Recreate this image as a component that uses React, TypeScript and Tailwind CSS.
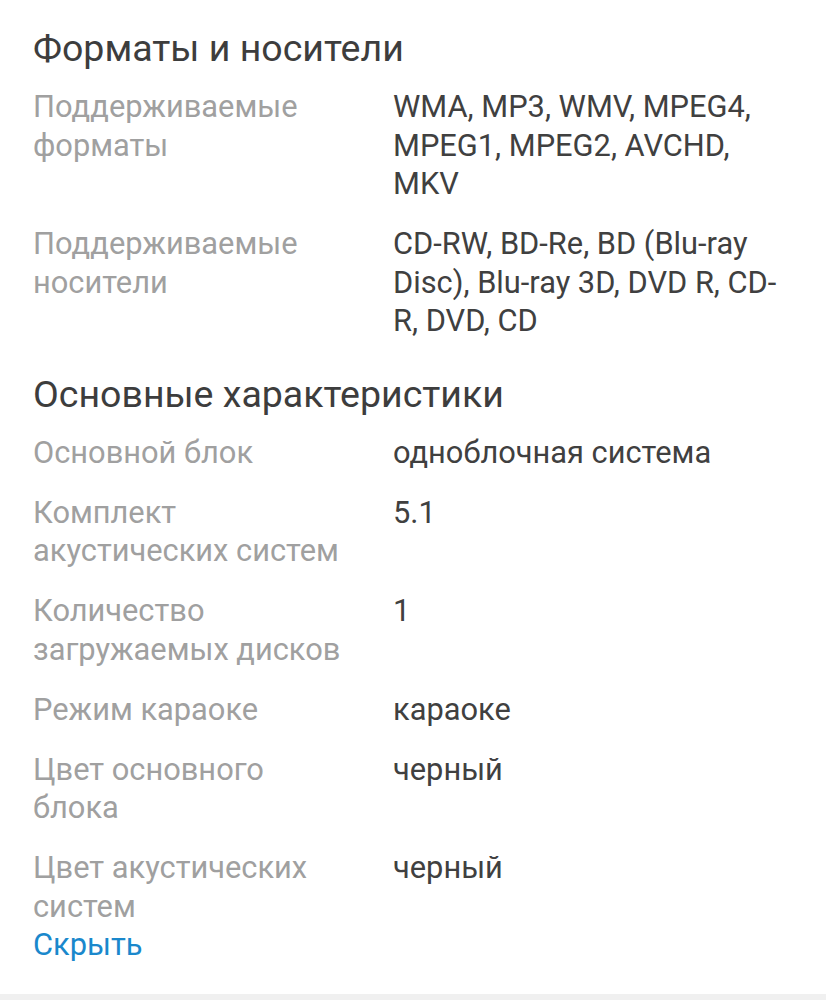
const formats = [
  { label: "Поддерживаемые форматы", value: "WMA, MP3, WMV, MPEG4, MPEG1, MPEG2, AVCHD, MKV" },
  { label: "Поддерживаемые носители", value: "CD-RW, BD-Re, BD (Blu-ray Disc), Blu-ray 3D, DVD R, CD-R, DVD, CD" },
];

const basics = [
  { label: "Основной блок", value: "одноблочная система" },
  { label: "Комплект акустических систем", value: "5.1" },
  { label: "Количество загружаемых дисков", value: "1" },
  { label: "Режим караоке", value: "караоке" },
  { label: "Цвет основного блока", value: "черный" },
  { label: "Цвет акустических систем", value: "черный" },
];

function Section({ title, rows }: { title: string; rows: { label: string; value: string }[] }) {
  return (
    <section>
      <h2 className="text-[37.5px] leading-[44px] text-[#3d3d3d]">{title}</h2>
      <div className="mt-[18px] flex flex-col gap-[21.5px]">
        {rows.map((r) => (
          <div key={r.label} className="grid grid-cols-[360px_1fr] text-[30.8px] leading-[38.5px]">
            <div className="w-[316px] text-[#a0a0a0]">{r.label}</div>
            <div className="text-[#404040]">{r.value}</div>
          </div>
        ))}
      </div>
    </section>
  );
}

export default function App() {
  return (
    <div className="min-h-[1000px] bg-white font-['Roboto',sans-serif] flex flex-col">
      <div className="flex-1 px-[33px] pt-[26px]">
        <Section title="Форматы и носители" rows={formats} />
        <div className="mt-[31px]">
          <Section title="Основные характеристики" rows={basics} />
        </div>
        <button className="block text-[30.8px] leading-[38.5px] text-[#1a88cc]">Скрыть</button>
      </div>
      <div className="h-[6px] bg-[#f0f0f0]" />
    </div>
  );
}
